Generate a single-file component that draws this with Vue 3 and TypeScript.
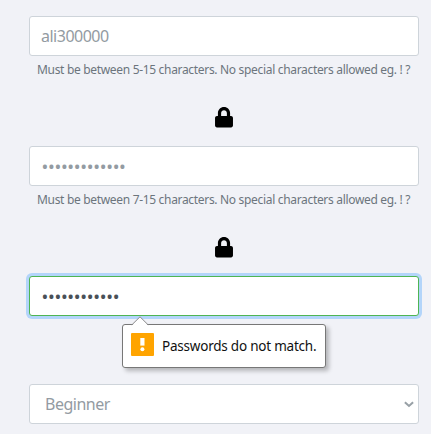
<script setup lang="ts">
interface Field {
  id: string
  value: string
  hint: string
  masked: boolean
}

const fields: Field[] = [
  {
    id: 'username',
    value: 'ali300000',
    hint: 'Must be between 5-15 characters. No special characters allowed eg. ! ?',
    masked: false,
  },
  {
    id: 'password',
    value: '•'.repeat(13),
    hint: 'Must be between 7-15 characters. No special characters allowed eg. ! ?',
    masked: true,
  },
]
const confirmation: string = '•'.repeat(12)
</script>

<template>
  <main class="form">
    <section v-for="field in fields" :key="field.id" class="group">
      <div class="control"><span :class="field.masked ? 'dots' : 'value'">{{ field.value }}</span></div>
      <div class="hint"><span class="hint-text">{{ field.hint }}</span></div>
      <svg class="lock" viewBox="0 0 448 512" aria-hidden="true">
        <path d="M400 224h-24v-72C376 68.2 307.8 0 224 0S72 68.2 72 152v72H48c-26.5 0-48 21.5-48 48v192c0 26.5 21.5 48 48 48h352c26.5 0 48-21.5 48-48V272c0-26.5-21.5-48-48-48zm-104 0H152v-72c0-39.7 32.3-72 72-72s72 32.3 72 72v72z" />
      </svg>
    </section>

    <section class="confirm">
      <div class="control focused"><span class="dots">{{ confirmation }}</span></div>
      <div class="tooltip" role="alert">
        <svg class="arrow" viewBox="0 0 18 10" aria-hidden="true">
          <path class="arrow-fill" d="M0.5 10 L9 0.8 L17.5 10Z" />
          <path class="arrow-line" d="M0.5 8.7 L1.2 8.5 L9 0.8 L16.8 8.5 L17.5 8.7" />
        </svg>
        <svg class="warning" viewBox="0 0 23 23" aria-hidden="true">
          <rect width="23" height="23" rx="1" fill="#ffa400" />
          <path d="M9.3 5h4.2v7.6H9.3z" fill="#fff" />
          <circle cx="11.4" cy="16.2" r="2" fill="#fff" />
        </svg>
        <span class="message">Passwords do not match.</span>
      </div>
    </section>

    <div class="control select">
      <span class="value">Beginner</span>
      <svg class="chevron" viewBox="0 0 10 7" aria-hidden="true">
        <path d="M0.9 1.2 L5 5 L9.1 1.2" />
      </svg>
    </div>
  </main>
</template>

<style>
body {
  background: #fff;
}
</style>

<style scoped>
.form {
  box-sizing: border-box;
  width: 431px;
  height: 434px;
  padding: 16px 12px 0 29px;
  background: #f1f2f7;
  font-family: "Noto Sans", "Open Sans", sans-serif;
  color: #939ba2;
}

.group {
  display: flex;
  flex-direction: column;
  height: 130px;
}

.control {
  box-sizing: border-box;
  display: flex;
  align-items: center;
  width: 390px;
  height: 40px;
  padding: 0 11px;
  border: 1px solid #ced4da;
  border-radius: 3px;
  background: #fff;
  white-space: nowrap;
}

.value {
  font-size: 16px;
  line-height: 24px;
  letter-spacing: -0.5px;
}

.dots {
  margin-left: 0.5px;
  font-size: 18px;
  line-height: 24px;
  letter-spacing: -0.3px;
}

.hint {
  height: 20px;
  margin: 3px 0 0 8px;
  white-space: nowrap;
  color: #6c757d;
}

.hint-text {
  display: block;
  font-size: 12px;
  line-height: 21px;
  letter-spacing: -0.32px;
}

.lock {
  display: block;
  width: 18px;
  height: 20.5px;
  margin: 28.3px 0 0 185.5px;
  fill: #000;
}

.confirm {
  position: relative;
  height: 108px;
}

.focused {
  border-color: #4fb553;
  box-shadow: 0 0 0 3px #b3d5fa;
  color: #495057;
}

.tooltip {
  position: absolute;
  top: 48px;
  left: 93px;
  box-sizing: border-box;
  display: flex;
  align-items: center;
  width: 204px;
  height: 44px;
  padding: 0 8px 3px;
  border: 1px solid #777;
  border-radius: 3px;
  background: #fff;
  box-shadow: 3px 3px 4px rgba(0, 0, 0, 0.25);
  color: #111;
}

.arrow {
  position: absolute;
  top: -9px;
  left: 8px;
  width: 18px;
  height: 10px;
}

.arrow-fill {
  fill: #fff;
}

.arrow-line {
  fill: none;
  stroke: #8a8a8a;
  stroke-width: 1;
}

.warning {
  flex: none;
  width: 23px;
  height: 23px;
}

.message {
  margin: 2px 0 0 8px;
  font-size: 13.5px;
  letter-spacing: -0.22px;
  white-space: nowrap;
}

.select {
  justify-content: space-between;
  padding: 0 4px 0 15px;
}

.chevron {
  width: 10px;
  height: 7px;
}

.chevron path {
  fill: none;
  stroke: #98a0a6;
  stroke-width: 2;
}
</style>
